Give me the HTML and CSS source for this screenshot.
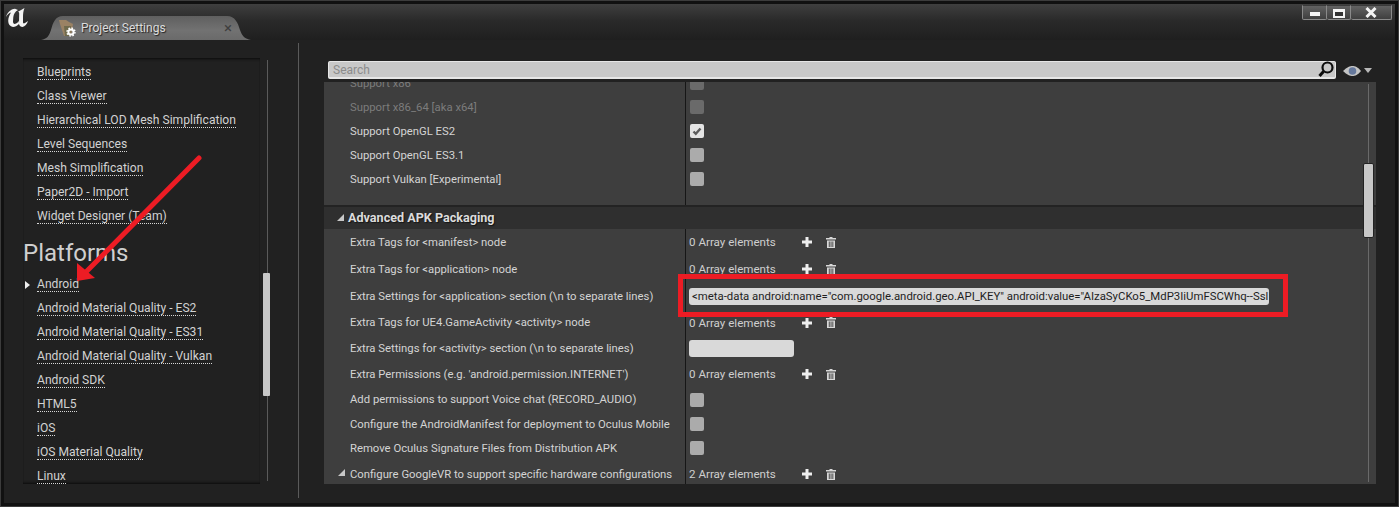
FILE: index.html
```html
<!DOCTYPE html>
<html lang="en">
<head>
  <meta charset="UTF-8" />
  <title>Project Settings</title>
  <link rel="stylesheet" href="styles.css">
</head>
<body>
  <svg class="defs" width="0" height="0">
    <symbol id="plus" viewBox="0 0 10 10"><path d="M3.500 0h3v3.500H10v3H6.500V10h-3V6.500H0v-3h3.500z" fill="#eee"/></symbol>
    <symbol id="trash" viewBox="0 0 10 11"><path d="M3.500 0h3v1H10v1.500H0V1h3.500zM1 3.500h8V11H1zM2.800 4.500v5.500h.9V4.500zM4.600 4.500v5.500h.9V4.500zM6.400 4.500v5.500h.9V4.500z" fill="#d8d8d8" fill-rule="evenodd"/></symbol>
  </svg>

  <div class="window">
    <div class="titlebar">
      <svg class="logo" width="22" height="19" viewBox="0 0 22 19">
        <path d="M0 9C1 5 4.500 1 9 .8L12 2C9 3.500 7.800 6 7.300 9L7 13.500C7 15.500 8 16.300 9.500 15.800C11 15.300 12 14.200 12.800 13L13 16C11 18 9 19 7 19C4 18.500 2.200 16 2.200 13C2.200 10 3.500 7 5 4.500C3 5 1.500 6.500 0 9Z" fill="#f4f4f4"/>
        <path d="M12 3.800L18.500 0C17.300 3 17 6 17 9L17 14C17 15.500 17.800 15.800 19 15L22 13C21 16 19 18.500 16.500 19C15 19 13.300 18 13 16L13.200 5.500C13.200 4.500 12.800 4 12 3.800Z" fill="#f4f4f4"/>
      </svg>
      <div class="tab">
        <svg class="tab-icon" width="18" height="17" viewBox="0 0 18 17">
          <path d="M0 0h7l3 2 4 2-2 12H5L1 4z" fill="#9a8264"/>
          <path d="M5 6h7l-1 10H6z" fill="#6f6a4c"/>
          <circle cx="12" cy="12" r="2.600" fill="none" stroke="#fff" stroke-width="2"/>
          <circle cx="12" cy="12" r="4" fill="none" stroke="#fff" stroke-width="1.400" stroke-dasharray="1.600 1.540"/>
        </svg>
        <span class="tab-title">Project Settings</span>
        <span class="tab-close">×</span>
      </div>
      <div class="win-buttons">
        <div class="win-btn win-min"><span class="min-bar"></span></div>
        <div class="win-btn win-max"><span class="max-box"></span></div>
        <div class="win-btn win-close">
          <svg width="12" height="11" viewBox="0 0 12 11"><path d="M1.500 1l9 9M10.500 1l-9 9" stroke="#f4f4f4" stroke-width="3"/></svg>
        </div>
      </div>
    </div>

    <div class="content">
      <div class="sidebar">
        <div class="nav-scroll">
          <div class="nav-item"><span>Blueprints</span></div>
          <div class="nav-item"><span>Class Viewer</span></div>
          <div class="nav-item"><span>Hierarchical LOD Mesh Simplification</span></div>
          <div class="nav-item"><span>Level Sequences</span></div>
          <div class="nav-item"><span>Mesh Simplification</span></div>
          <div class="nav-item"><span>Paper2D - Import</span></div>
          <div class="nav-item"><span>Widget Designer (Team)</span></div>
          <h2 class="nav-heading">Platforms</h2>
          <div class="nav-item nav-selected"><span>Android</span></div>
          <div class="nav-item"><span>Android Material Quality - ES2</span></div>
          <div class="nav-item"><span>Android Material Quality - ES31</span></div>
          <div class="nav-item"><span>Android Material Quality - Vulkan</span></div>
          <div class="nav-item"><span>Android SDK</span></div>
          <div class="nav-item"><span>HTML5</span></div>
          <div class="nav-item"><span>iOS</span></div>
          <div class="nav-item"><span>iOS Material Quality</span></div>
          <div class="nav-item"><span>Linux</span></div>
        </div>
        <div class="nav-track"></div>
        <div class="nav-thumb"></div>
      </div>

      <div class="main">
        <div class="search-row">
          <div class="search">
            <span class="search-text">Search</span>
            <svg class="search-icon" width="16" height="17" viewBox="0 0 16 17">
              <circle cx="9.500" cy="6.500" r="5" fill="none" stroke="#0c0c0c" stroke-width="2.200"/>
              <path d="M5.500 10.500L1.500 15" stroke="#0c0c0c" stroke-width="3"/>
            </svg>
          </div>
          <svg class="eye" width="30" height="10" viewBox="0 0 30 10">
            <path d="M0 5C4 1 7 0 9.500 0S15 1 18 5C15 9 12 10 9.500 10S4 9 0 5Z" fill="#c4c4c4"/>
            <circle cx="9.500" cy="5" r="3.800" fill="#65789c"/>
            <path d="M21 2h8l-4 5z" fill="#b8b8b8"/>
          </svg>
        </div>

        <div class="panel">
          <div class="rows rows-top">
            <div class="row"><div class="label disabled">Support x86</div><div class="value"><span class="check check-off"></span></div></div>
            <div class="row"><div class="label disabled">Support x86_64 [aka x64]</div><div class="value"><span class="check check-off"></span></div></div>
            <div class="row"><div class="label">Support OpenGL ES2</div><div class="value">
              <span class="check check-on"><svg width="14" height="14" viewBox="0 0 14 14"><path d="M3.500 7.500l2.300 2.300L10.500 4.500" fill="none" stroke="#5c5c5c" stroke-width="2.400"/></svg></span>
            </div></div>
            <div class="row"><div class="label">Support OpenGL ES3.1</div><div class="value"><span class="check"></span></div></div>
            <div class="row"><div class="label">Support Vulkan [Experimental]</div><div class="value"><span class="check"></span></div></div>
            <div class="row row-end"><div class="label"></div><div class="value"></div></div>
          </div>

          <div class="section-head"><span class="arrow"></span>Advanced APK Packaging</div>

          <div class="rows">
            <div class="row h26"><div class="label">Extra Tags for &lt;manifest&gt; node</div><div class="value"><span class="count">0 Array elements</span><svg class="ico"><use href="#plus"/></svg><svg class="ico ico-trash"><use href="#trash"/></svg></div></div>
            <div class="row h28"><div class="label">Extra Tags for &lt;application&gt; node</div><div class="value"><span class="count">0 Array elements</span><svg class="ico"><use href="#plus"/></svg><svg class="ico ico-trash"><use href="#trash"/></svg></div></div>
            <div class="row h26"><div class="label">Extra Settings for &lt;application&gt; section (\n to separate lines)</div><div class="value"><div class="input input-long">&lt;meta-data android:name="com.google.android.geo.API_KEY" android:value="AIzaSyCKo5_MdP3IiUmFSCWhq--Ssl</div></div></div>
            <div class="row h27"><div class="label">Extra Tags for UE4.GameActivity &lt;activity&gt; node</div><div class="value"><span class="count">0 Array elements</span><svg class="ico"><use href="#plus"/></svg><svg class="ico ico-trash"><use href="#trash"/></svg></div></div>
            <div class="row h25"><div class="label">Extra Settings for &lt;activity&gt; section (\n to separate lines)</div><div class="value"><div class="input input-short"></div></div></div>
            <div class="row h26"><div class="label">Extra Permissions (e.g. 'android.permission.INTERNET')</div><div class="value"><span class="count">0 Array elements</span><svg class="ico"><use href="#plus"/></svg><svg class="ico ico-trash"><use href="#trash"/></svg></div></div>
            <div class="row h25"><div class="label">Add permissions to support Voice chat (RECORD_AUDIO)</div><div class="value"><span class="check"></span></div></div>
            <div class="row"><div class="label">Configure the AndroidManifest for deployment to Oculus Mobile</div><div class="value"><span class="check"></span></div></div>
            <div class="row"><div class="label">Remove Oculus Signature Files from Distribution APK</div><div class="value"><span class="check"></span></div></div>
            <div class="row h28"><div class="label"><span class="arrow arrow-row"></span>Configure GoogleVR to support specific hardware configurations</div><div class="value"><span class="count">2 Array elements</span><svg class="ico"><use href="#plus"/></svg><svg class="ico ico-trash"><use href="#trash"/></svg></div></div>
          </div>

          <div class="panel-track"></div>
          <div class="panel-thumb"></div>
        </div>
      </div>
    </div>
  </div>

  <!-- annotations drawn on top of the screenshot -->
  <div class="red-box"></div>
  <svg class="red-arrow" width="1399" height="507" viewBox="0 0 1399 507">
    <path d="M199 158L84 274" stroke="#ed1c24" stroke-width="5" stroke-linecap="round"/>
    <path d="M77 281L77 263L95 278Z" fill="#ed1c24"/>
  </svg>
</body>
</html>
```
FILE: styles.css
```css
* {
  box-sizing: border-box;
}

body {
  margin: 0;
  width: 1399px;
  height: 507px;
  overflow: hidden;
  position: relative;
  background: #101010;
  font-family: Roboto, 'Liberation Sans', sans-serif;
  font-size: 12px;
  color: #d2d2d2;
}

.defs {
  position: absolute;
}

.window {
  height: 507px;
  border: 4px solid #111;
  outline: 1px solid #3c3c3c;
  outline-offset: -1px;
  background: #212121;
  display: flex;
  flex-direction: column;
}

/* title bar */
.titlebar {
  height: 36px;
  flex: none;
  display: flex;
  background: linear-gradient(to bottom, #3f3f3f, #2a2a2a 45%, #1f1f1f);
}

.logo {
  margin: 4px 0 0 2px;
  flex: none;
}

.tab {
  width: 210px;
  height: 24px;
  margin: 12px 0 0 13px;
  flex: none;
  display: flex;
  align-items: center;
  background: linear-gradient(to bottom, #5f5f5f, #727272 60%, #6a6a6a);
  clip-path: path('M0 24C6 23 8 20 10 14C12 7 14 0 22 0H186C194 0 197 7 199 14C201 20 204 23 210 24Z');
}

.tab-icon {
  margin: 1px 0 0 18px;
  flex: none;
}

.tab-title {
  margin-left: 4px;
  color: #dcdcdc;
  text-shadow: 1px 1px 1px #222;
}

.tab-close {
  margin-left: auto;
  margin-right: 19px;
  font-size: 15px;
  color: #3f3f3f;
}

.win-buttons {
  margin: 1px 3px 0 auto;
  height: 15px;
  display: flex;
}

.win-btn {
  height: 15px;
  display: flex;
  align-items: center;
  justify-content: center;
  background: linear-gradient(to bottom, #626262, #3f3f3f);
  border: 1px solid #8a8a8a;
  border-top-color: #3a3a3a;
  border-radius: 0 0 2px 2px;
}

.win-min {
  width: 25px;
}

.win-max {
  width: 24px;
  border-left: 0;
}

.win-close {
  width: 41px;
  border-left: 0;
}

.min-bar {
  width: 10px;
  height: 4px;
  margin-top: 3px;
  background: #f4f4f4;
}

.max-box {
  width: 12px;
  height: 9px;
  margin-top: 1px;
  border: 2px solid #f4f4f4;
  border-top-width: 3px;
  background: #333;
}

/* body */
.content {
  flex: 1;
  min-height: 0;
  display: flex;
  padding: 3px 0 5px;
}

.sidebar {
  width: 295px;
  flex: none;
  position: relative;
  padding: 15px 0 14px 19px;
  border-right: 1px solid #5a5a5a;
}

.nav-scroll {
  width: 237px;
  height: 426px;
  padding: 3px 0 0;
  overflow: hidden;
  box-shadow: inset 0 3px 3px -2px #0a0a0a, inset 0 -3px 3px -2px #0a0a0a;
}

.nav-item {
  height: 24px;
  padding-left: 14px;
  position: relative;
  display: flex;
  align-items: center;
  font-size: 12.1px;
}

.nav-item span {
  line-height: 13px;
  border-bottom: 1px dotted #d8d8d8;
}

.nav-selected::before {
  content: "";
  position: absolute;
  left: 2px;
  top: 8px;
  border-left: 5px solid #eee;
  border-top: 4px solid transparent;
  border-bottom: 4px solid transparent;
}

.nav-heading {
  height: 44px;
  margin: 0;
  padding-top: 11px;
  font-size: 24px;
  line-height: 26px;
  font-weight: 400;
  color: #cfcfcf;
}

.nav-track {
  position: absolute;
  left: 263px;
  top: 17px;
  bottom: 17px;
  width: 1px;
  background: #5a5a5a;
}

.nav-thumb {
  position: absolute;
  left: 259px;
  top: 230px;
  width: 7px;
  height: 123px;
  background: #c8c8c8;
  border-radius: 1px;
}

.main {
  flex: 1;
  min-width: 0;
  padding: 18px 19px 0 25px;
}

.search-row {
  height: 18px;
  margin-left: 4px;
  display: flex;
  align-items: center;
}

.search {
  flex: 1;
  height: 18px;
  display: flex;
  align-items: center;
  padding: 0 1px 0 4px;
  background: #c8c8c8;
  border: 1px solid #e6e6e6;
  border-width: 1px 1px 2px;
  border-radius: 2px;
}

.search-text {
  color: #8c8c8c;
}

.search-icon {
  margin-left: auto;
}

.eye {
  width: 30px;
  margin: 2px 3px 0 7px;
  flex: none;
}

.panel {
  height: 402px;
  margin-top: 3px;
  position: relative;
  overflow: hidden;
  background: #3e3e3e;
}

.rows-top {
  margin-top: -11px;
}

.row {
  height: 24px;
  display: grid;
  grid-template-columns: 361px 1fr;
}

.h25 { height: 25px; }
.h26 { height: 26px; }
.h27 { height: 27px; }
.h28 { height: 28px; }

.row-end {
  height: 14px;
}

.label {
  padding-left: 26px;
  position: relative;
  display: flex;
  align-items: center;
  white-space: nowrap;
  font-size: 11.3px;
  color: #d4d4d4;
}

.label.disabled {
  color: #7c7c7c;
}

.value {
  border-left: 1px solid #161616;
  padding-left: 4px;
  display: flex;
  align-items: center;
}

.check {
  width: 14px;
  height: 14px;
  border-radius: 2px;
  background: #ababab;
}

.check-off {
  background: #6a6a6a;
}

.check-on {
  background: #e4e4e4;
}

.check svg {
  display: block;
}

.count {
  width: 113px;
  flex: none;
  margin-left: -1px;
  font-size: 11.6px;
  color: #cfcfcf;
}

.ico {
  width: 10px;
  height: 10px;
  flex: none;
}

.ico-trash {
  height: 11px;
  margin-left: 14px;
}

.input {
  height: 17px;
  margin-left: -1px;
  padding-left: 3px;
  border-radius: 3px;
  background: #d9d9d9;
  color: #1e1e1e;
  font-size: 11.37px;
  line-height: 17px;
  white-space: nowrap;
  overflow: hidden;
}

.input-long {
  width: 580px;
}

.input-short {
  width: 105px;
}

.section-head {
  height: 24px;
  padding: 0 0 2px 24px;
  position: relative;
  display: flex;
  align-items: center;
  background: #2f2f2f;
  border-top: 2px solid #232323;
  font-size: 12.6px;
  font-weight: 700;
  color: #dcdcdc;
  text-shadow: 1px 1px 1px #151515;
}

.arrow {
  position: absolute;
  left: 13px;
  top: 7px;
  border-bottom: 7px solid #c8c8c8;
  border-left: 7px solid transparent;
}

.arrow-row {
  left: 14px;
  top: 9px;
}

.panel-track {
  position: absolute;
  left: 1044px;
  top: 2px;
  bottom: 2px;
  width: 1px;
  background: #6a6a6a;
}

.panel-thumb {
  position: absolute;
  left: 1039px;
  top: 81px;
  width: 11px;
  height: 75px;
  background: #c8c8c8;
  border: 1px solid #222;
  border-radius: 2px;
}

/* annotations */
.red-box {
  position: absolute;
  left: 678px;
  top: 274px;
  width: 610px;
  height: 43px;
  border: 5px solid #ed1c24;
}

.red-arrow {
  position: absolute;
  left: 0;
  top: 0;
}
```
